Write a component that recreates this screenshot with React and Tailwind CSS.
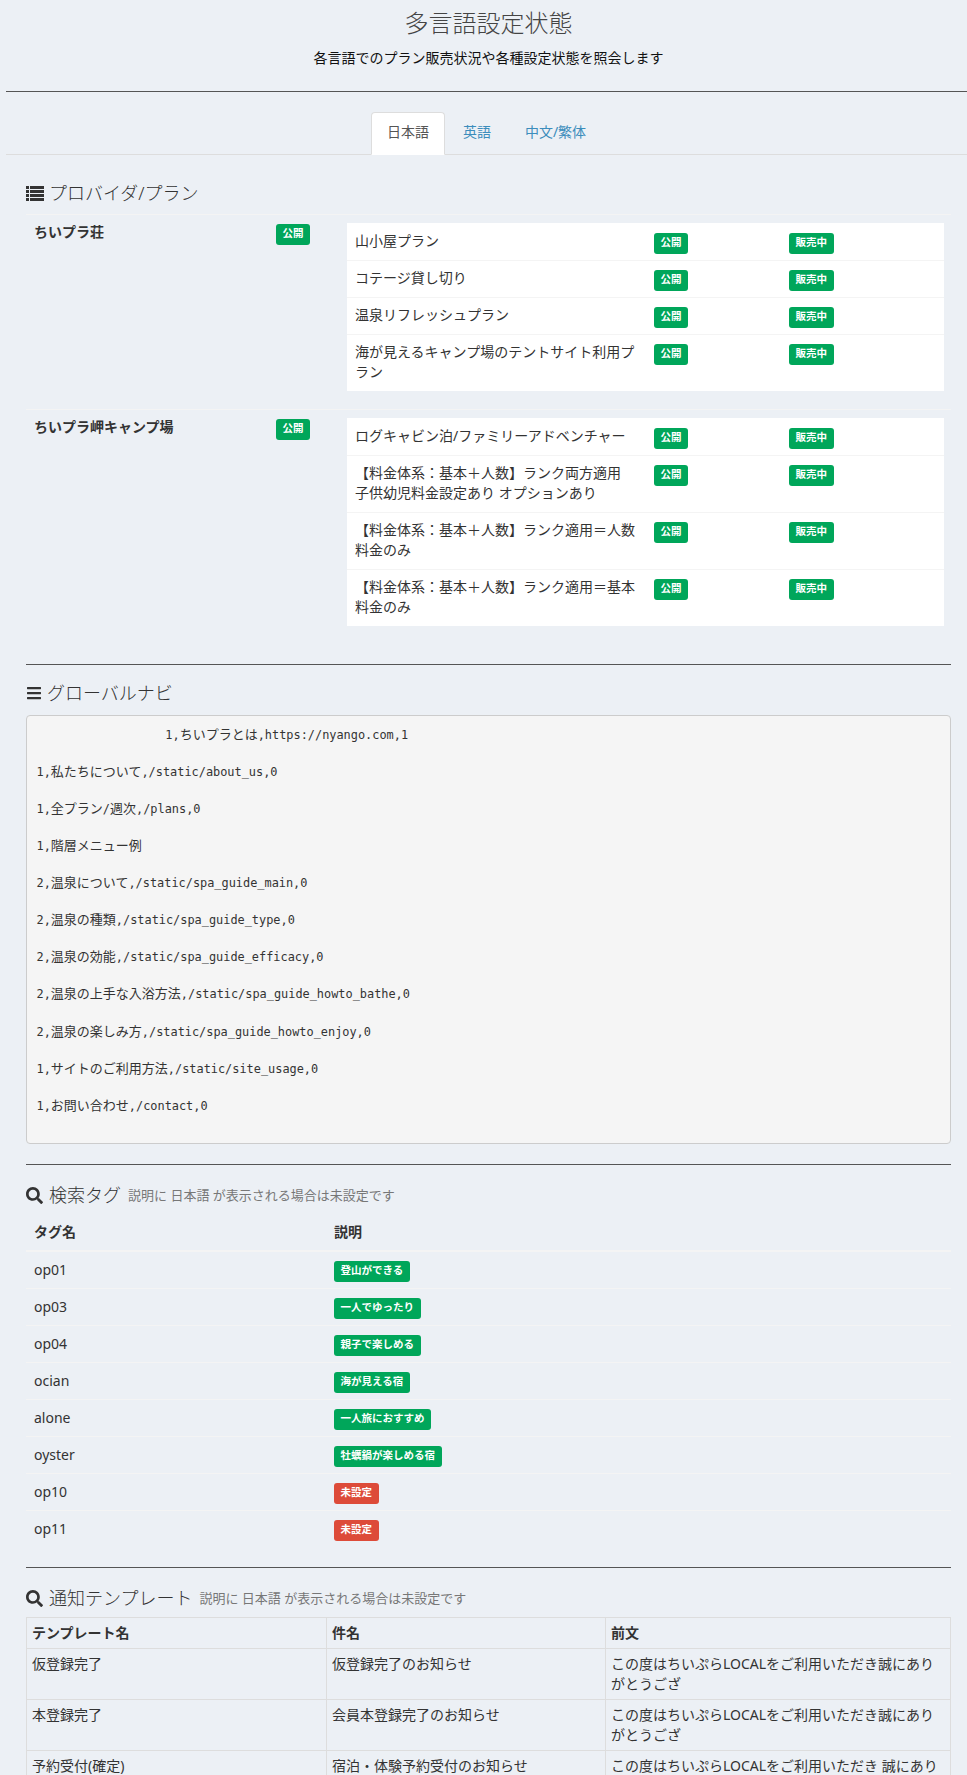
import React from 'react';
import { FaBars, FaSearch } from 'react-icons/fa';

const providers = [
  {
    name: 'ちいプラ荘',
    plans: [
      '山小屋プラン',
      'コテージ貸し切り',
      '温泉リフレッシュプラン',
      '海が見えるキャンプ場のテントサイト利用プラン',
    ],
  },
  {
    name: 'ちいプラ岬キャンプ場',
    plans: [
      'ログキャビン泊/ファミリーアドベンチャー',
      '【料金体系：基本＋人数】ランク両方適用 子供幼児料金設定あり オプションあり',
      '【料金体系：基本＋人数】ランク適用＝人数料金のみ',
      '【料金体系：基本＋人数】ランク適用＝基本料金のみ',
    ],
  },
];

const navLines = [
  '                  1,ちいプラとは,https://nyango.com,1',
  '1,私たちについて,/static/about_us,0',
  '1,全プラン/週次,/plans,0',
  '1,階層メニュー例',
  '2,温泉について,/static/spa_guide_main,0',
  '2,温泉の種類,/static/spa_guide_type,0',
  '2,温泉の効能,/static/spa_guide_efficacy,0',
  '2,温泉の上手な入浴方法,/static/spa_guide_howto_bathe,0',
  '2,温泉の楽しみ方,/static/spa_guide_howto_enjoy,0',
  '1,サイトのご利用方法,/static/site_usage,0',
  '1,お問い合わせ,/contact,0',
];

const tags = [
  ['op01', '登山ができる'],
  ['op03', '一人でゆったり'],
  ['op04', '親子で楽しめる'],
  ['ocian', '海が見える宿'],
  ['alone', '一人旅におすすめ'],
  ['oyster', '牡蠣鍋が楽しめる宿'],
  ['op10', '未設定', true],
  ['op11', '未設定', true],
];

const templates = [
  ['仮登録完了', '仮登録完了のお知らせ', 'この度はちいぷらLOCALをご利用いただき誠にありがとうござ'],
  ['本登録完了', '会員本登録完了のお知らせ', 'この度はちいぷらLOCALをご利用いただき誠にありがとうござ'],
  ['予約受付(確定)', '宿泊・体験予約受付のお知らせ', 'この度はちいぷらLOCALをご利用いただき 誠にありがとうござ'],
];

function Badge({ children, red }) {
  return (
    <span className={`inline-block h-[21px] rounded-[3px] px-[6.5px] text-[10.5px] font-bold leading-[18px] text-white align-top ${red ? 'bg-[#dd4b39]' : 'bg-[#00a65a]'}`}>
      {children}
    </span>
  );
}

function Heading({ icon, children, note }) {
  return (
    <h4 className="flex items-center text-[18px] leading-[20px] font-light text-[#333]">
      {icon}
      <span>{children}</span>
      {note && <span className="ml-[7px] text-[13px] font-normal text-[#777]">{note}</span>}
    </h4>
  );
}

// fa-list: four rows, square bullet plus bar
function ListIcon() {
  return (
    <svg className="mr-[5px]" width="18" height="15" viewBox="0 0 18 15" fill="#333">
      {[0, 4, 8, 12].map((y) => (
        <g key={y}>
          <rect x="0" y={y} width="3" height="3" />
          <rect x="4" y={y} width="14" height="3" />
        </g>
      ))}
    </svg>
  );
}

// ASCII is set a size smaller so the mono font gets Consolas' advance
function MonoLine({ text }) {
  const parts = text.split(/([\x20-\x7e]+)/).filter(Boolean);
  return (
    <div className="mb-[18.57px] h-[18.57px] whitespace-pre">
      {parts.map((p, i) => (
        /^[\x20-\x7e]/.test(p)
          ? <span key={i} className="font-['DejaVu_Sans_Mono','Noto_Sans_CJK_JP',monospace] text-[11.9px]">{p}</span>
          : <span key={i}>{p}</span>
      ))}
    </div>
  );
}

export default function App() {
  return (
    <div className="h-[1775px] overflow-hidden bg-[#ecf0f5] font-['Noto_Sans','Noto_Sans_CJK_JP',sans-serif] text-[14px] leading-[20px] text-[#333]">
      <h3 className="pl-[10px] pt-[10px] text-center text-[24px] leading-[26px] font-light text-[#444]">多言語設定状態</h3>
      <p className="mt-[12px] pl-[10px] text-center text-[#111]">各言語でのプラン販売状況や各種設定状態を照会します</p>
      <hr className="ml-[6px] mt-[23px] border-t border-[#555]" />

      {/* タブ */}
      <div className="ml-[6px] mt-[20px] flex h-[43px] justify-center gap-[2px] border-b border-[#ddd]">
        <div className="h-[43px] rounded-t-[4px] border border-[#ddd] border-b-white bg-white px-[15px] py-[9px] text-[#555]">日本語</div>
        <div className="border border-transparent px-[15px] py-[9px] text-[#3c8dbc]">英語</div>
        <div className="border border-transparent px-[15px] py-[9px] text-[#3c8dbc]">中文/繁体</div>
      </div>

      <div className="ml-[26px] mr-[16px] mt-[28px]">
        <Heading icon={<ListIcon />}>プロバイダ/プラン</Heading>

        <div className="mt-[11px]">
          {providers.map((pv) => (
            <div key={pv.name} className="flex border-t border-[#f4f4f4] pt-[8px] pb-[18px]">
              <div className="-mt-[1px] w-[242px] px-[8px] font-bold">{pv.name}</div>
              <div className="w-[71px] px-[8px] pt-[1px]"><Badge>公開</Badge></div>
              <div className="ml-[8px] w-[597px] bg-white">
                {pv.plans.map((plan, i) => (
                  <div key={plan} className={`flex items-start border-t ${i > 0 ? 'border-[#f4f4f4]' : 'border-white'}`}>
                    <div className="w-[299px] px-[8px] pt-[7px] pb-[9px]">{plan}</div>
                    <div className="w-[135px] px-[8px] pt-[9px]"><Badge>公開</Badge></div>
                    <div className="flex-1 px-[8px] pt-[9px]"><Badge>販売中</Badge></div>
                  </div>
                ))}
              </div>
            </div>
          ))}
        </div>

        <hr className="mt-[20px] border-t border-[#555]" />

        <div className="mt-[18px]">
          <Heading icon={<FaBars className="mr-[5px] h-[16px] w-[16px]" />}>グローバルナビ</Heading>
        </div>
        <div className="mt-[12px] rounded-[4px] border border-[#ccc] bg-[#f5f5f5] px-[9.5px] pt-[9.5px] pb-[9.5px] font-['DejaVu_Sans_Mono','Noto_Sans_CJK_JP',monospace] text-[13px] leading-[18.57px]">
          {navLines.map((l) => <MonoLine key={l} text={l} />)}
        </div>

        <hr className="mt-[20px] border-t border-[#555]" />

        <div className="mt-[20px]">
          <Heading icon={<FaSearch className="mr-[6px] h-[17px] w-[17px]" />} note="説明に 日本語 が表示される場合は未設定です">検索タグ</Heading>
        </div>
        <table className="mt-[9px] w-full table-fixed border-collapse">
          <thead>
            <tr className="border-b-2 border-[#f4f4f4]">
              <th className="w-[300px] p-[8px] text-left font-bold">タグ名</th>
              <th className="p-[8px] text-left font-bold">説明</th>
            </tr>
          </thead>
          <tbody>
            {tags.map(([key, label, red], i) => (
              <tr key={key} className={i > 0 ? 'border-t border-[#f4f4f4]' : ''}>
                <td className="p-[8px] align-top">{key}</td>
                <td className="px-[8px] pt-[9px] pb-[6px] align-top"><Badge red={red}>{label}</Badge></td>
              </tr>
            ))}
          </tbody>
        </table>

        <hr className="mt-[20px] border-t border-[#555]" />

        <div className="mt-[20px]">
          <Heading icon={<FaSearch className="mr-[6px] h-[17px] w-[17px]" />} note="説明に 日本語 が表示される場合は未設定です">通知テンプレート</Heading>
        </div>
        <table className="mt-[9px] w-full table-fixed border-collapse">
          <thead>
            <tr>
              <th className="w-[300px] border border-[#ddd] p-[5px] text-left font-bold">テンプレート名</th>
              <th className="w-[279px] border border-[#ddd] p-[5px] text-left font-bold">件名</th>
              <th className="border border-[#ddd] p-[5px] text-left font-bold">前文</th>
            </tr>
          </thead>
          <tbody>
            {templates.map((row) => (
              <tr key={row[0]}>
                {row.map((cell) => (
                  <td key={cell} className="border border-[#ddd] p-[5px] align-top">{cell}</td>
                ))}
              </tr>
            ))}
          </tbody>
        </table>
      </div>
    </div>
  );
}
